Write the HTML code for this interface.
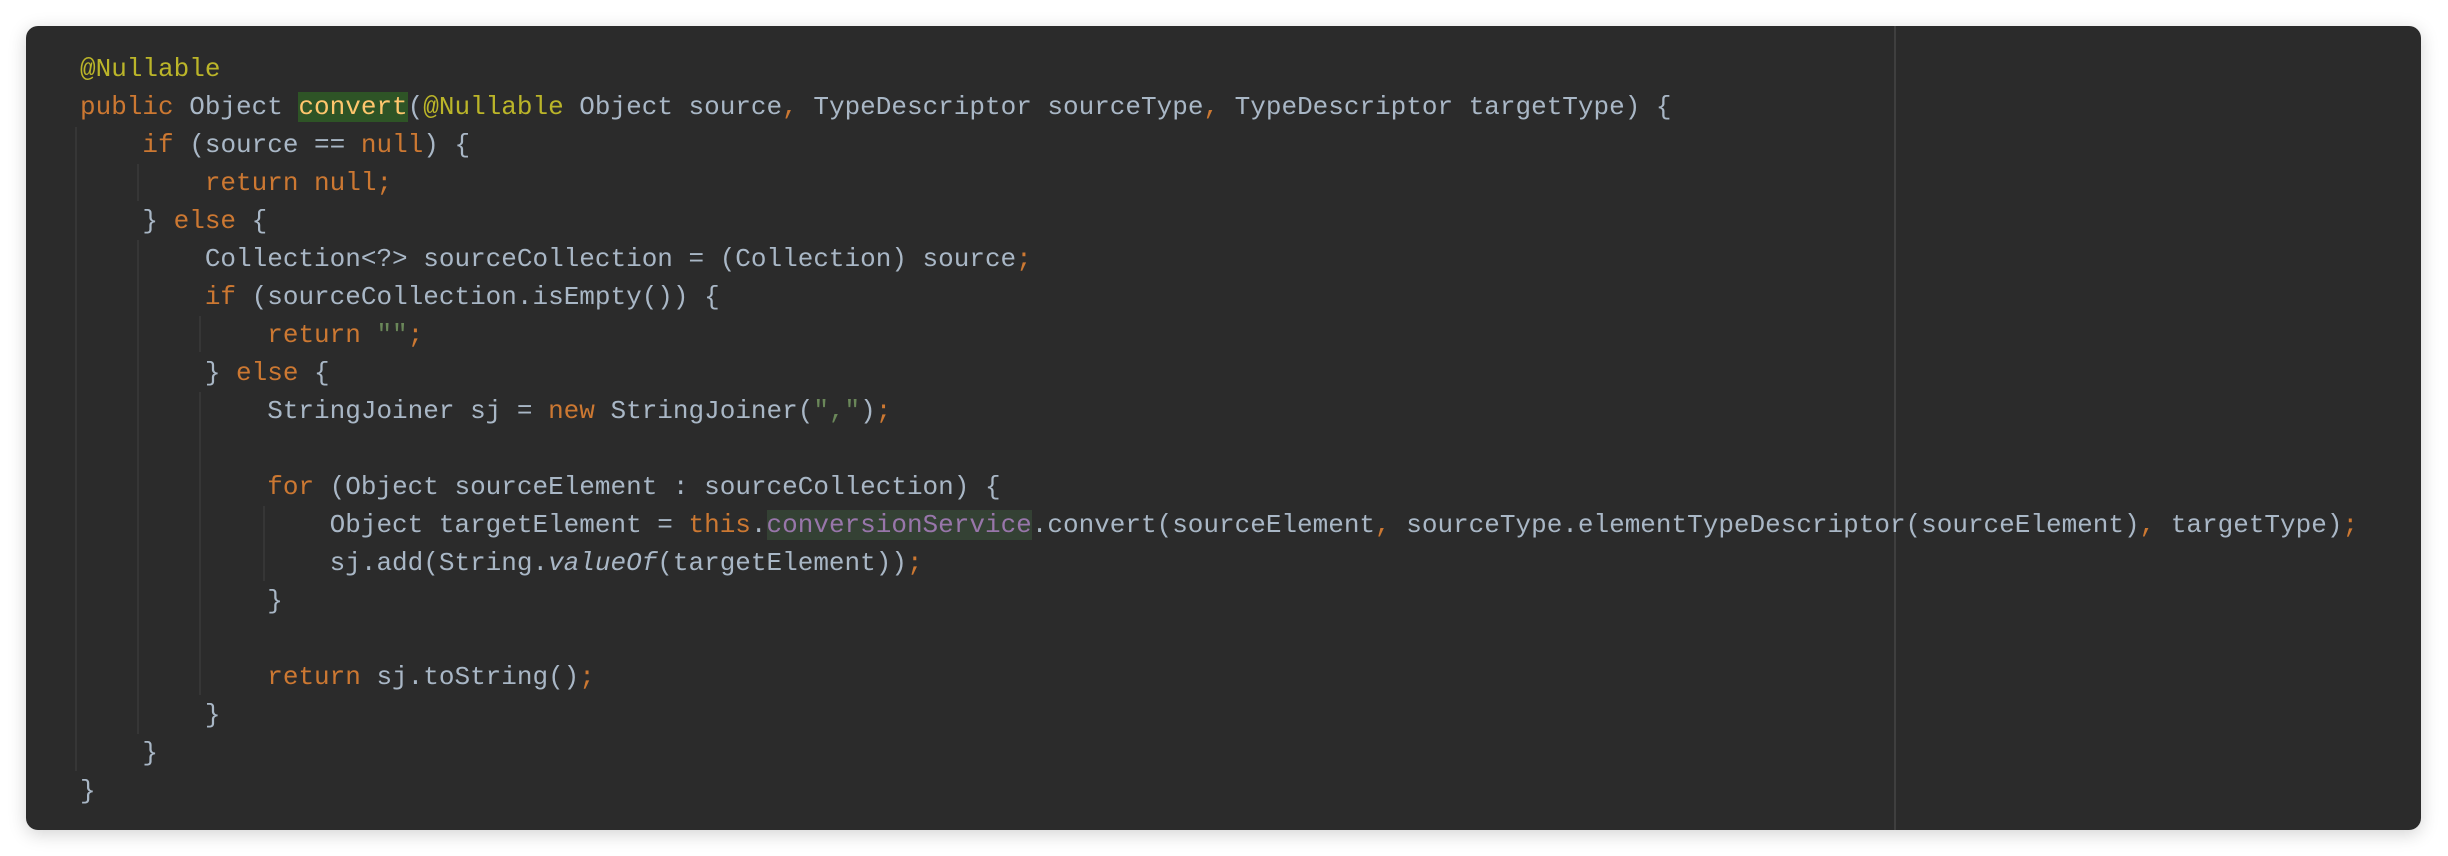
<!DOCTYPE html>
<html><head><meta charset="utf-8"><style>
html,body{margin:0;padding:0;background:#fff;width:2448px;height:856px;overflow:hidden;}
.panel{position:absolute;left:26px;top:26px;width:2395px;height:804px;background:#2b2b2b;border-radius:12px;box-shadow:0 4px 18px rgba(0,0,0,0.18);overflow:hidden;}
.vl{position:absolute;left:1868px;top:0;width:2px;height:804px;background:#3f3f3f;}
.g{position:absolute;width:2px;background:#363636;}
pre{position:absolute;left:54px;top:24px;margin:0;font-family:"Liberation Mono",monospace;font-size:26px;line-height:38px;color:#a9b7c6;white-space:pre;}
.k{color:#cc7832}.a{color:#bbb529}.s{color:#6a8759}
.hl{background:#2e5426;color:#ffc66d}
.p{color:#9876aa;background:#344134}
.i{font-style:italic}
</style></head><body>
<div class="panel">
<div class="vl"></div>
<div class="g" style="left:49px;top:101px;height:644px"></div>
<div class="g" style="left:111px;top:138px;height:37px"></div>
<div class="g" style="left:111px;top:214px;height:494px"></div>
<div class="g" style="left:173px;top:290px;height:36px"></div>
<div class="g" style="left:173px;top:366px;height:303px"></div>
<div class="g" style="left:237px;top:480px;height:75px"></div>
<pre><span class="a">@Nullable</span>
<span class="k">public </span>Object <span class="hl">convert</span>(<span class="a">@Nullable</span> Object source<span class="k">, </span>TypeDescriptor sourceType<span class="k">, </span>TypeDescriptor targetType) {
    <span class="k">if </span>(source == <span class="k">null</span>) {
        <span class="k">return null;</span>
    } <span class="k">else </span>{
        Collection&lt;?&gt; sourceCollection = (Collection) source<span class="k">;</span>
        <span class="k">if </span>(sourceCollection.isEmpty()) {
            <span class="k">return </span><span class="s">""</span><span class="k">;</span>
        } <span class="k">else </span>{
            StringJoiner sj = <span class="k">new </span>StringJoiner(<span class="s">","</span>)<span class="k">;</span>

            <span class="k">for </span>(Object sourceElement : sourceCollection) {
                Object targetElement = <span class="k">this</span>.<span class="p">conversionService</span>.convert(sourceElement<span class="k">, </span>sourceType.elementTypeDescriptor(sourceElement)<span class="k">, </span>targetType)<span class="k">;</span>
                sj.add(String.<span class="i">valueOf</span>(targetElement))<span class="k">;</span>
            }

            <span class="k">return </span>sj.toString()<span class="k">;</span>
        }
    }
}</pre>
</div>
</body></html>
